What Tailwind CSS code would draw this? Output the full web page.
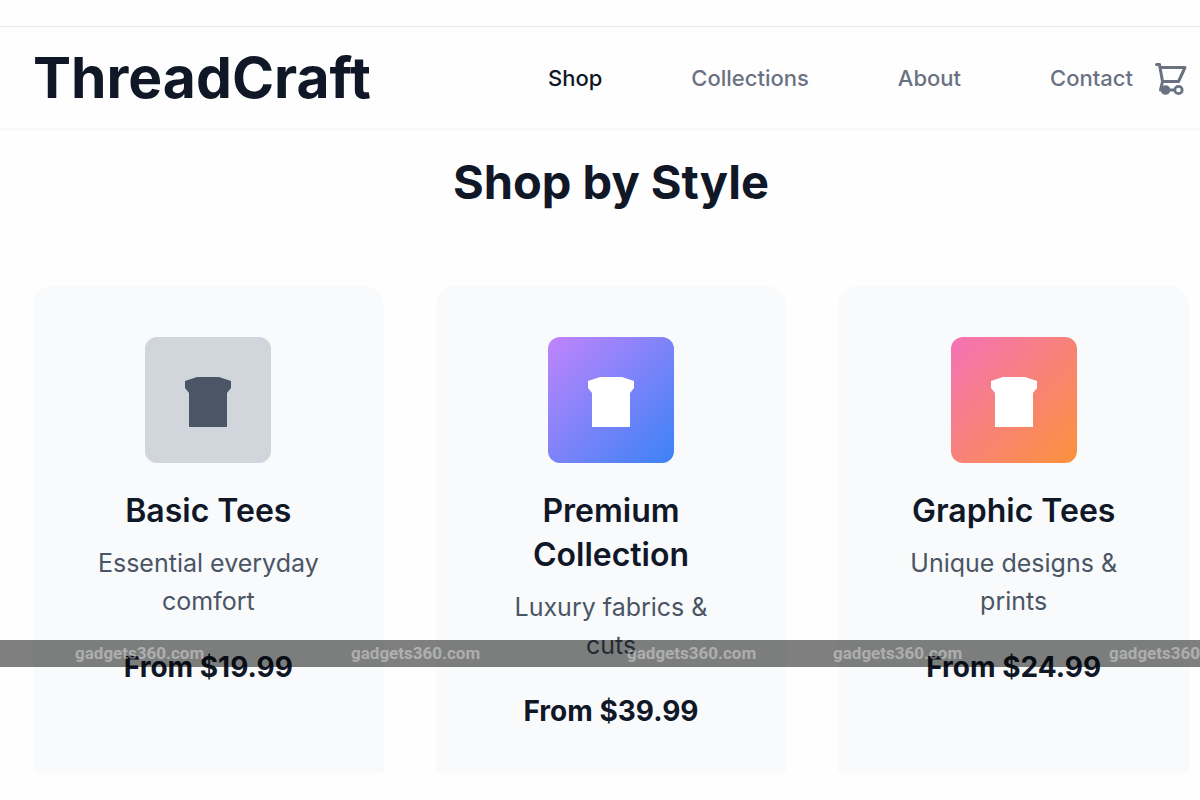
<!DOCTYPE html>
<html lang="en">
<head>
<meta charset="utf-8">
<meta name="viewport" content="width=device-width, initial-scale=1">
<title>ThreadCraft</title>
<script src="https://cdn.jsdelivr.net/npm/@tailwindcss/browser@4"></script>
</head>
<body class="relative bg-[#fefefe] pt-[26px] font-['Inter',sans-serif] text-gray-900">
<svg class="hidden" aria-hidden="true">
  <symbol id="tee" viewBox="0 0 46 50"><path d="M0 4 12 0H34L46 4V11L42 16V50H4V16L0 11Z"/></symbol>
</svg>
<header class="flex h-[104px] items-center justify-between border-t border-b-2 border-t-[#e9eaec] border-b-[#f7f8f8] pr-[11px] pl-[33px]">
  <a href="#" class="text-[57px] leading-[64px] font-bold">ThreadCraft</a>
  <div class="flex items-center gap-[18px]">
    <nav class="flex gap-[89px] text-[22px] leading-8 font-medium text-gray-500">
      <a href="#" class="text-gray-900">Shop</a>
      <a href="#">Collections</a>
      <a href="#">About</a>
      <a href="#">Contact</a>
    </nav>
    <button type="button" aria-label="Cart" class="text-gray-500">
      <svg class="size-[38px]" viewBox="0 0 38 38" fill="none" stroke="currentColor" stroke-width="3" stroke-linecap="round" stroke-linejoin="round">
        <path d="M5.500 5.500H8.500L11.500 22.500H27.500L34 8.500H9M11.500 22.500 9.500 31H27"/>
        <circle cx="14.500" cy="31" r="3.300" fill="currentColor"/>
        <circle cx="27.500" cy="31" r="3.700" stroke-width="2.800" fill="#fefefe"/>
      </svg>
    </button>
  </div>
</header>
<main class="pr-[11px] pl-[33px] pt-[22px]">
  <h1 class="mb-[74px] text-center text-[47px] leading-[60px] font-bold">Shop by Style</h1>
  <div class="grid grid-cols-3 gap-[52px] text-center">
    <article class="rounded-t-[20px] rounded-b-[3px] bg-gray-50 px-[50px] pt-[51px] pb-10">
      <div class="mx-auto mb-[26px] flex size-[126px] items-center justify-center rounded-xl bg-gray-300 text-gray-600">
        <svg class="mt-1 h-[50px] w-[46px]" fill="currentColor"><use href="#tee"/></svg>
      </div>
      <h2 class="mb-[11px] text-[32px] leading-[44px] font-semibold">Basic Tees</h2>
      <p class="mb-[25px] px-2 text-[25px] leading-[38px] text-gray-600">Essential everyday comfort</p>
      <p class="text-[28px] leading-[44px] font-bold">From $19.99</p>
    </article>
    <article class="rounded-t-[20px] rounded-b-[3px] bg-gray-50 px-[50px] pt-[51px] pb-10">
      <div class="mx-auto mb-[26px] flex size-[126px] items-center justify-center rounded-xl bg-linear-to-br/srgb from-[#c084fc] to-[#3b82f6] text-white">
        <svg class="mt-1 h-[50px] w-[46px]" fill="currentColor"><use href="#tee"/></svg>
      </div>
      <h2 class="mb-[11px] text-[32px] leading-[44px] font-semibold">Premium Collection</h2>
      <p class="mb-[25px] px-2 text-[25px] leading-[38px] text-gray-600">Luxury fabrics &amp; cuts</p>
      <p class="text-[28px] leading-[44px] font-bold">From $39.99</p>
    </article>
    <article class="rounded-t-[20px] rounded-b-[3px] bg-gray-50 px-[50px] pt-[51px] pb-10">
      <div class="mx-auto mb-[26px] flex size-[126px] items-center justify-center rounded-xl bg-linear-to-br/srgb from-[#f472b6] to-[#fb923c] text-white">
        <svg class="mt-1 h-[50px] w-[46px]" fill="currentColor"><use href="#tee"/></svg>
      </div>
      <h2 class="mb-[11px] text-[32px] leading-[44px] font-semibold">Graphic Tees</h2>
      <p class="mb-[25px] px-2 text-[25px] leading-[38px] text-gray-600">Unique designs &amp; prints</p>
      <p class="text-[28px] leading-[44px] font-bold">From $24.99</p>
    </article>
  </div>
</main>
<!-- Watermark strip over the page -->
<div class="pointer-events-none absolute inset-x-0 top-[640px] flex h-[27px] items-center overflow-hidden bg-black/50 pl-[75px] font-['Roboto',sans-serif] text-[17px] leading-[27px] font-bold text-white/40">
  <span class="w-[276px] shrink-0">gadgets360.com</span>
  <span class="w-[276px] shrink-0">gadgets360.com</span>
  <span class="w-[206px] shrink-0">gadgets360.com</span>
  <span class="w-[276px] shrink-0">gadgets360.com</span>
  <span class="w-[276px] shrink-0">gadgets360.com</span>
</div>
</body>
</html>
